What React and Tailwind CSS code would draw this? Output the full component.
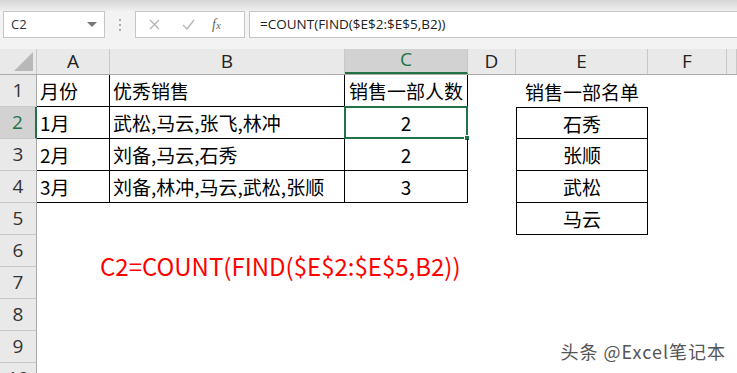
import React from "react";

const cols = [
  { key: "A", w: "w-[73px]" },
  { key: "B", w: "w-[235px]" },
  { key: "C", w: "w-[123px]" },
  { key: "D", w: "w-[48px]" },
  { key: "E", w: "w-[132px]" },
  { key: "F", w: "w-[79px]" },
  { key: "", w: "flex-1" },
];

// cell content per row: [A, B, C, D, E]
const rows = [
  ["月份", "优秀销售", "销售一部人数", "", "销售一部名单"],
  ["1月", "武松,马云,张飞,林冲", "2", "", "石秀"],
  ["2月", "刘备,马云,石秀", "2", "", "张顺"],
  ["3月", "刘备,林冲,马云,武松,张顺", "3", "", "武松"],
  ["", "", "", "", "马云"],
];

const cjk = "font-['Noto_Sans_CJK_SC','Noto_Sans',sans-serif]";

function RowHeader({ n, selected }) {
  return (
    <div
      className={`w-[37px] h-full flex items-center justify-center border-b border-[#c8c8c8] text-[19px] font-['Open_Sans',sans-serif] ${
        selected
          ? "bg-[#d2d2d2] text-[#217346] border-r-2 border-r-[#217346]"
          : "bg-[#e9e9e9] text-[#333] border-r border-r-[#a8a8a8]"
      }`}
    >
      {n}
    </div>
  );
}

function Cell({ r, c, children }) {
  const inTable = r <= 3 && c <= 2;
  const inList = c === 4 && r >= 1 && r <= 4;
  let cls = "h-full flex items-center relative ";
  if (inTable) cls += "border-r border-b border-black ";
  if (inList) cls += "border-x border-b border-black justify-center ";
  if (inList && r === 1) cls += "border-t ";
  if (c === 2) cls += "justify-center ";
  if (c === 4 && r === 0) cls += "justify-center ";
  if (c <= 1) cls += "pl-[3px] ";
  return (
    <div className={`${cols[c].w} ${cls}`}>
      <span className="text-[19px] leading-none text-black">{children}</span>
      {r === 1 && c === 2 && (
        <div className="absolute -left-px -top-px -right-px -bottom-px border-2 border-[#217346] pointer-events-none">
          <div className="absolute -right-[4px] -bottom-[4px] w-[6px] h-[6px] bg-[#217346] border border-white" />
        </div>
      )}
    </div>
  );
}

export default function App() {
  return (
    <div className={`w-[737px] h-[373px] overflow-hidden bg-white ${cjk} relative`}>
      {/* top band */}
      <div className="h-[11px] bg-gradient-to-b from-[#d6d6d6] to-[#efefef]" />

      {/* formula bar */}
      <div className="h-[38px] bg-[#f3f3f3] flex items-start gap-0">
        <div className="ml-[3px] w-[102px] h-[27px] bg-white border border-[#c6c6c6] flex items-center justify-between px-[7px] font-['Open_Sans',sans-serif] text-[13px] text-[#333]">
          <span>C2</span>
          <span className="w-0 h-0 border-l-[5px] border-r-[5px] border-t-[5px] border-l-transparent border-r-transparent border-t-[#777]" />
        </div>
        <div className="w-[30px] h-[27px] flex flex-col items-center justify-center gap-[3px]">
          <span className="w-[2px] h-[2px] bg-[#aaa]" />
          <span className="w-[2px] h-[2px] bg-[#aaa]" />
          <span className="w-[2px] h-[2px] bg-[#aaa]" />
        </div>
        <div className="w-[110px] h-[27px] bg-white border border-[#c6c6c6] flex items-center">
          <svg className="ml-[13px]" width="11" height="11" viewBox="0 0 11 11">
            <path d="M1 1 L10 10 M10 1 L1 10" stroke="#b4b4b4" strokeWidth="1.3" />
          </svg>
          <svg className="ml-[22px]" width="13" height="11" viewBox="0 0 13 11">
            <path d="M1 6 L5 10 L12 1" stroke="#b4b4b4" strokeWidth="1.3" fill="none" />
          </svg>
          <span className="ml-[17px] text-[14px] italic text-[#666] font-['Liberation_Serif',serif]">
            f<span className="text-[11px]">x</span>
          </span>
        </div>
        <div className="ml-[4px] flex-1 h-[27px] bg-white border border-r-0 border-[#c6c6c6] flex items-center pl-[10px] text-[13.5px] text-[#222] font-['Open_Sans',sans-serif]">
          =COUNT(FIND($E$2:$E$5,B2))
        </div>
      </div>

      {/* column headers */}
      <div className="flex h-[26px] bg-[#e9e9e9] border-b border-[#ababab]">
        <div className="w-[37px] h-full border-r border-[#c8c8c8] relative">
          <svg className="absolute right-[3px] bottom-[3px]" width="19" height="19" viewBox="0 0 19 19">
            <path d="M19 0 L19 19 L0 19 Z" fill="#b8b8b8" />
          </svg>
        </div>
        {cols.map((c, i) => (
          <div
            key={i}
            className={`${c.w} h-full flex items-end justify-center pb-[1px] text-[19px] font-['Open_Sans',sans-serif] leading-none ${
              c.key === "C"
                ? "bg-[#d2d2d2] text-[#217346] border-b-2 border-[#217346] border-r border-r-[#c8c8c8]"
                : "text-[#222] border-r border-[#c8c8c8]"
            }`}
          >
            <span className="mb-[2px]">{c.key}</span>
          </div>
        ))}
      </div>

      {/* rows */}
      {Array.from({ length: 10 }).map((_, i) => {
        const r = i;
        const data = rows[r] || [];
        return (
          <div key={r} className="flex h-[32px]">
            <RowHeader n={r + 1} selected={r === 1} />
            {cols.map((c, ci) => (
              <Cell key={ci} r={r} c={ci}>
                {data[ci] || ""}
              </Cell>
            ))}
          </div>
        );
      })}

      {/* red formula note */}
      <div className="absolute left-[100px] top-[254px] text-[24px] leading-none text-[#ff0000]">
        C2=COUNT(FIND($E$2:$E$5,B2))
      </div>

      {/* watermark */}
      <div className="absolute right-[11px] top-[342px] text-[18px] tracking-[1px] leading-none text-[#555] [text-shadow:0_0_2px_#fff,0_0_2px_#fff]">
        头条 @Excel笔记本
      </div>
    </div>
  );
}
